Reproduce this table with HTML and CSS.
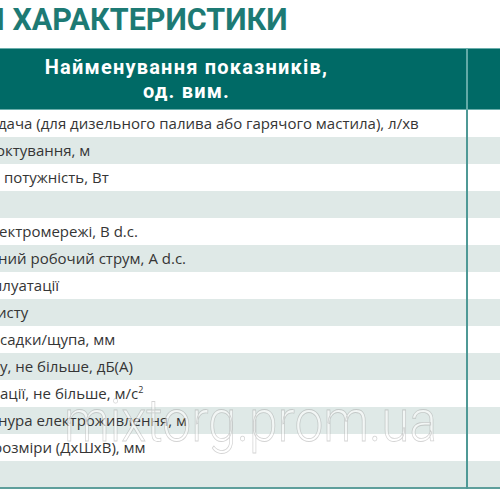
FILE: index.html
```html
<!DOCTYPE html>
<html lang="uk">
<head>
<meta charset="utf-8">
<link rel="stylesheet" href="styles.css">
</head>
<body>
<div class="page">
  <h1 class="title">І ХАРАКТЕРИСТИКИ</h1>
  <table class="specs">
    <thead>
      <tr>
        <th class="name-head">Найменування показників,<br>од. вим.</th>
        <th class="val-head"></th>
      </tr>
    </thead>
    <tbody>
      <tr><td class="c2">дача (для дизельного палива або гарячого мастила), л/хв</td><td></td></tr>
      <tr><td class="c4">октування, м</td><td></td></tr>
      <tr><td class="c0"> потужність, Вт</td><td></td></tr>
      <tr><td></td><td></td></tr>
      <tr><td class="c1">ектромережі, В d.c.</td><td></td></tr>
      <tr><td class="c2">ний робочий струм, А d.c.</td><td></td></tr>
      <tr><td class="c6">плуатації</td><td></td></tr>
      <tr><td class="c3">исту</td><td></td></tr>
      <tr><td class="c0">садки/щупа, мм</td><td></td></tr>
      <tr><td class="c0">у, не більше, дБ(А)</td><td></td></tr>
      <tr><td class="c0">ації, не більше, м/с<sup>2</sup></td><td></td></tr>
      <tr><td class="c2">нура електроживлення, м</td><td></td></tr>
      <tr><td class="c6">розміри (ДхШхВ), мм</td><td></td></tr>
      <tr><td></td><td></td></tr>
    </tbody>
  </table>
  <div class="watermark">mixtorg.prom.ua</div>
</div>
</body>
</html>
```

FILE: styles.css
```css
html, body {
  margin: 0;
  padding: 0;
  background: #ffffff;
  overflow: hidden;
}

.page {
  position: relative;
  width: 500px;
  height: 500px;
  overflow: hidden;
}

.title {
  margin: 0;
  height: 48px;
  padding-top: 2px;
  box-sizing: border-box;
  font-family: Roboto, "Liberation Sans", sans-serif;
  font-weight: 700;
  font-size: 30.5px;
  line-height: 36px;
  color: #1d7a74;
  white-space: nowrap;
  text-indent: -4px;
}

.specs {
  border-collapse: collapse;
  width: 540px;
  table-layout: fixed;
  border-top: 1px solid #6aaeab;
  border-bottom: 2px solid #5e9f9c;
}

.specs th {
  background: #006a66;
  color: #ffffff;
  font-family: Roboto, "Liberation Sans", sans-serif;
  font-weight: 700;
  font-size: 20px;
  letter-spacing: 1.2px;
  line-height: 24px;
  height: 60px;
  padding: 0;
  border-bottom: 1px solid #6aaeab;
}

.name-head {
  width: 467px;
  padding-right: 93px !important;
  box-sizing: border-box;
  text-align: center;
  border-right: 2px solid #62aaa7;
}

.specs td {
  height: 27px;
  padding: 0;
  font-family: "Open Sans", "Liberation Sans", sans-serif;
  font-size: 15px;
  color: #353535;
  white-space: pre;
  overflow: hidden;
  vertical-align: middle;
  box-sizing: border-box;
}

.specs td:first-child {
  border-right: 2px solid #4f9996;
}

.specs tbody tr:nth-child(even) td {
  background: #dfe9e7;
}

.specs sup {
  font-size: 9px;
  line-height: 0;
}

.c0 { text-indent: 0; }
.c1 { text-indent: -1px; }
.c2 { text-indent: -2px; }
.c3 { text-indent: -3px; }
.c4 { text-indent: -4px; }
.c6 { text-indent: -7px; }

.watermark {
  position: absolute;
  left: 64px;
  top: 386px;
  font-family: Roboto, "Liberation Sans", sans-serif;
  font-weight: 300;
  font-size: 51.5px;
  line-height: 60px;
  transform: scaleY(1.16);
  transform-origin: left top;
  color: rgba(255, 255, 255, 0.6);
  -webkit-text-stroke: 0.7px rgba(110, 110, 110, 0.3);
  white-space: nowrap;
  pointer-events: none;
}
```
